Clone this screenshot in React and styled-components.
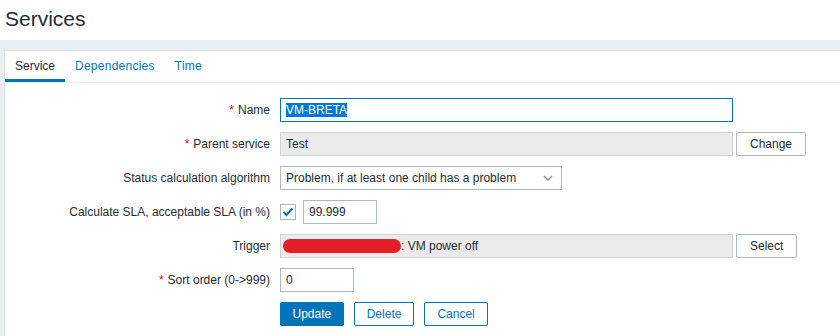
import styled, { createGlobalStyle } from "styled-components";

const GlobalStyle = createGlobalStyle`
  html, body {
    margin: 0;
    padding: 0;
    background: #ebeef0;
    font-family: "Liberation Sans", Arial, sans-serif;
    font-size: 12px;
    color: #1f2c33;
  }
`;

const Header = styled.header`
  height: 40px;
  background: #ffffff;
  padding-left: 5px;
  display: flex;
  align-items: center;
`;

const Title = styled.h1`
  margin: 0;
  margin-top: -2px;
  font-size: 21px;
  font-weight: normal;
  color: #1f2c33;
`;

const Panel = styled.main`
  margin: 10px 0 0 4px;
  background: #ffffff;
  border-left: 1px solid #dfe4e7;
  border-top: 1px solid #dfe4e7;
  min-height: 285px;
`;

const Tabs = styled.nav`
  display: flex;
  border-bottom: 1px solid #ebeef0;
  height: 31px;
`;

const Tab = styled.a`
  display: flex;
  align-items: center;
  padding: 2px 10px 0;
  letter-spacing: ${(p) => (p.$active ? "0" : "0.25px")};
  color: ${(p) => (p.$active ? "#1f2c33" : "#0275b8")};
  border-bottom: 3px solid ${(p) => (p.$active ? "#0275b8" : "transparent")};
  cursor: pointer;
`;

const Form = styled.form`
  display: grid;
  grid-template-columns: 265px 1fr;
  column-gap: 10px;
  row-gap: 10px;
  padding-top: 15px;
`;

const Label = styled.label`
  display: flex;
  align-items: center;
  justify-content: flex-end;
  height: 24px;
  white-space: nowrap;
`;

const Asterisk = styled.span`
  color: #d40000;
  margin-right: 4px;
`;

const Field = styled.div`
  display: flex;
  align-items: center;
  gap: ${(p) => p.$gap || 3}px;
  height: 24px;
`;

const TextBox = styled.div`
  box-sizing: border-box;
  width: ${(p) => p.$w}px;
  height: 24px;
  display: flex;
  align-items: center;
  padding: 0 5px;
  border: 1px solid ${(p) => (p.$focus ? "#0275b8" : p.$readonly ? "#ccd5d9" : "#acbbc2")};
  background: ${(p) => (p.$readonly ? "#ebebeb" : "#ffffff")};
  white-space: nowrap;
  overflow: hidden;
`;

const Selected = styled.span`
  background: #0078d7;
  color: #ffffff;
`;

const Redaction = styled.span`
  display: inline-block;
  width: 118px;
  height: 14px;
  margin-left: -3px;
  border-radius: 7px;
  background: #e31e24;
`;

const Dropdown = styled(TextBox)`
  justify-content: space-between;
  padding-right: 8px;
`;

const Checkbox = styled.span`
  box-sizing: border-box;
  width: 16px;
  height: 16px;
  border: 1px solid #acbbc2;
  display: flex;
  align-items: center;
  justify-content: center;
  margin-top: -1px;
`;

const Button = styled.button`
  box-sizing: border-box;
  height: 24px;
  padding: 0 ${(p) => p.$pad || 12}px;
  font-family: inherit;
  font-size: 12px;
  border: 1px solid ${(p) => (p.$variant === "plain" ? "#acbbc2" : "#0275b8")};
  background: ${(p) => (p.$variant === "primary" ? "#0275b8" : "#ffffff")};
  color: ${(p) =>
    p.$variant === "primary" ? "#ffffff" : p.$variant === "plain" ? "#1f2c33" : "#0275b8"};
  border-radius: 2px;
  cursor: pointer;
`;

const Actions = styled(Field)`
  gap: 10px;
`;

const Chevron = () => (
  <svg width="10" height="6" viewBox="0 0 10 6">
    <path d="M1 1 L5 5 L9 1" fill="none" stroke="#7f8c93" strokeWidth="1.4" />
  </svg>
);

const Check = () => (
  <svg width="12" height="10" viewBox="0 0 12 10">
    <path d="M1.5 5 L4.5 8 L10.5 1.5" fill="none" stroke="#0275b8" strokeWidth="2" />
  </svg>
);

const Req = ({ children }) => (
  <Label>
    <Asterisk>*</Asterisk>
    {children}
  </Label>
);

export default function App() {
  return (
    <>
      <GlobalStyle />
      <Header>
        <Title>Services</Title>
      </Header>
      <Panel>
        <Tabs>
          <Tab $active>Service</Tab>
          <Tab>Dependencies</Tab>
          <Tab>Time</Tab>
        </Tabs>
        <Form>
          <Req>Name</Req>
          <Field>
            <TextBox $w={453} $focus>
              <Selected>VM-BRETA</Selected>
            </TextBox>
          </Field>

          <Req>Parent service</Req>
          <Field>
            <TextBox $w={453} $readonly>Test</TextBox>
            <Button type="button" $variant="plain" $pad={13}>Change</Button>
          </Field>

          <Label>Status calculation algorithm</Label>
          <Field>
            <Dropdown $w={282}>
              Problem, if at least one child has a problem
              <Chevron />
            </Dropdown>
          </Field>

          <Label>Calculate SLA, acceptable SLA (in %)</Label>
          <Field $gap={7}>
            <Checkbox>
              <Check />
            </Checkbox>
            <TextBox $w={74}>99.999</TextBox>
          </Field>

          <Label>Trigger</Label>
          <Field>
            <TextBox $w={453} $readonly>
              <Redaction />: VM power off
            </TextBox>
            <Button type="button" $variant="plain" $pad={13}>Select</Button>
          </Field>

          <Req>Sort order (0-&gt;999)</Req>
          <Field>
            <TextBox $w={74}>0</TextBox>
          </Field>

          <span />
          <Actions>
            <Button type="button" $variant="primary" $pad={11.5}>Update</Button>
            <Button type="button">Delete</Button>
            <Button type="button">Cancel</Button>
          </Actions>
        </Form>
      </Panel>
    </>
  );
}
